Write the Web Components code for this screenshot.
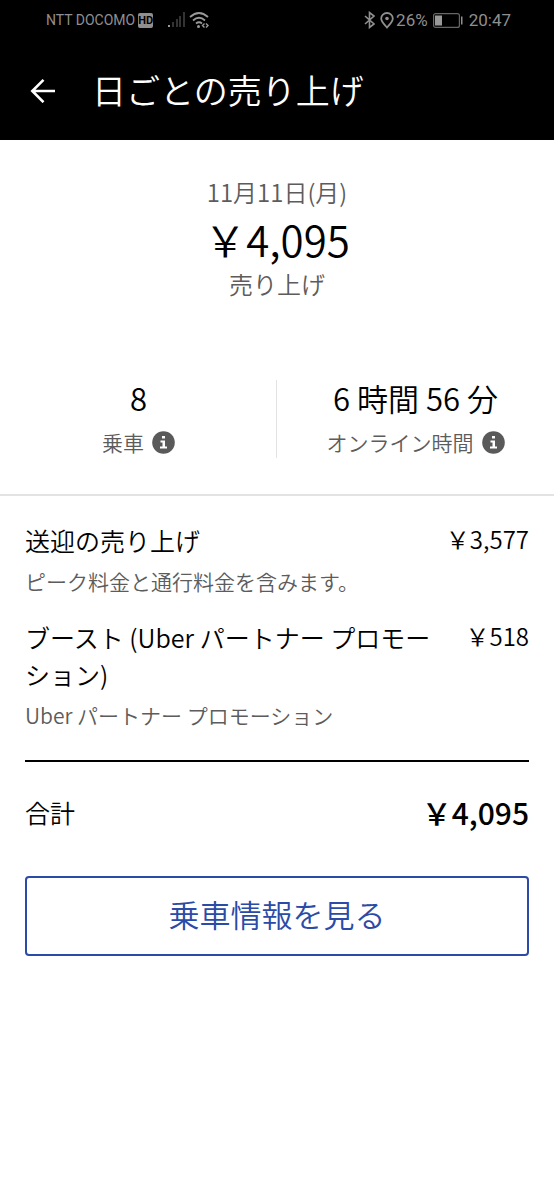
<!DOCTYPE html>
<html lang="ja">
<head>
<meta charset="utf-8">
<meta name="viewport" content="width=device-width, initial-scale=1">
<title>日ごとの売り上げ</title>
<style>
  body {
    margin: 0;
    background: #fff;
    color: #000;
    font-family: "Noto Sans CJK JP", sans-serif;
    font-weight: 350;
    --muted: #5c5c5c;
    --line: #e3e3e3;
    --accent: #2b4ba6;
    --gutter: 25px;
  }
</style>
</head>
<body>
<earnings-page></earnings-page>

<script>
const define = (name, html) => {
  const template = document.createElement('template');
  template.innerHTML = html;
  customElements.define(name, class extends HTMLElement {
    constructor() {
      super();
      this.attachShadow({ mode: 'open' }).append(template.content.cloneNode(true));
    }
  });
};

define('status-bar', `
  <style>
    :host { display: flex; justify-content: space-between; align-items: center; height: 40px;
      padding: 0 43px 0 46px; background: #000; color: #8f8f8f; font: 17px/24px Roboto, sans-serif; }
    div { display: flex; align-items: center; }
    .carrier { font-size: 14px; }
    svg { display: block; flex: none; }
    .hd { margin-left: 3px; border-radius: 2px; background: #8f8f8f; color: #000;
      font: bold 11px/15px Roboto, sans-serif; }
    .signal { margin-left: 15px; }
    .wifi { margin-left: 4px; }
    .pin { margin: 0 2px 0 5px; }
    .battery { margin: 0 6px 0 5px; }
  </style>
  <div>
    <span class="carrier">NTT DOCOMO</span><span class="hd">HD</span>
    <svg class="signal" width="17" height="16" viewBox="0 0 17 16" fill="#333">
      <rect x="0" y="13" width="2" height="2" fill="#999"/><rect x="4" y="10" width="2" height="5"/>
      <rect x="8" y="7" width="2" height="8"/><rect x="11" y="4" width="2" height="11"/><rect x="15" y="0" width="2" height="15"/>
    </svg>
    <svg class="wifi" width="20" height="18" viewBox="0 0 20 18" fill="none" stroke="#999" stroke-width="2">
      <path d="M1 6Q10-2 19 6M4 9.500Q10 4 16 9.500M7 12.500q3-2.500 6 0" stroke-width="1.800"/>
      <circle cx="9.500" cy="15.500" r="1.500" fill="#999" stroke="none"/>
      <path d="M15.500 12.500L13.500 14.500L15.500 16.500M17 12.500L19 14.500L17 16.500" stroke-width="1.400"/>
    </svg>
  </div>
  <div>
    <svg width="11" height="18" viewBox="0 0 11 18" fill="none" stroke="#8f8f8f" stroke-width="1.600">
      <path d="M1 5L10 13L5.500 16.500V1.500L10 5L1 13"/>
    </svg>
    <svg class="pin" width="14" height="17" viewBox="0 0 14 17" fill="none" stroke="#8f8f8f" stroke-width="1.800">
      <path d="M7 15.500C5 13 1.200 10 1.200 6.500A5.800 5.500 0 0 1 12.800 6.500C12.800 10 9 13 7 15.500Z"/>
      <circle cx="7" cy="6.500" r="1.800" fill="#8f8f8f" stroke="none"/>
    </svg>
    <span>26%</span>
    <svg class="battery" width="30" height="15" viewBox="0 0 30 15">
      <rect x=".600" y=".600" width="25.800" height="13.800" rx="2" fill="none" stroke="#666" stroke-width="1.200"/>
      <rect x="2" y="2.500" width="7" height="10" fill="#999"/><rect x="28" y="3.500" width="1.500" height="8" fill="#8f8f8f"/>
    </svg>
    <span>20:47</span>
  </div>
`);

define('app-bar', `
  <style>
    :host { display: flex; align-items: center; gap: 27px; height: 100px; padding: 0 var(--gutter);
      background: #000; color: #fff; box-sizing: border-box; }
    button { display: flex; align-items: center; justify-content: center; width: 44px; height: 44px;
      margin: 0 0 0 -4px; padding: 0; border: 0; background: none; color: inherit; }
    h1 { margin: 0; font-size: 34px; font-weight: inherit; line-height: 50px; }
  </style>
  <button type="button" aria-label="戻る">
    <svg width="26" height="26" viewBox="0 0 26 26" fill="none" stroke="currentColor" stroke-width="2.600">
      <path d="M25 14H2.500M13.500 2.800L2.300 14L13.500 25.200"/>
    </svg>
  </button>
  <h1><slot></slot></h1>
`);

define('earnings-summary', `
  <style>
    :host { display: flex; flex-direction: column; align-items: center; padding: 34px var(--gutter) 0; text-align: center; }
    .date, .label { color: var(--muted); font-size: 24px; line-height: 36px; }
    .amount { font-size: 42px; line-height: 58px; }
    .label { line-height: 32px; }
  </style>
  <div class="date"><slot name="date"></slot></div>
  <div class="amount"><slot name="amount"></slot></div>
  <div class="label"><slot></slot></div>
`);

define('stat-item', `
  <style>
    :host { display: flex; flex-direction: column; align-items: center; height: 78px; }
    .value { font-size: 31px; line-height: 36px; }
    .label { display: flex; align-items: center; gap: 8px; margin-top: 10px; color: var(--muted);
      font-size: 21px; line-height: 32px; }
    button { display: block; padding: 0; border: 0; background: none; color: inherit; }
    svg { display: block; }
  </style>
  <div class="value"><slot name="value"></slot></div>
  <div class="label"><slot></slot>
    <button type="button" aria-label="詳細">
      <svg width="23" height="23" viewBox="0 0 23 23"><circle cx="11.500" cy="11.500" r="11.300" fill="#5a5a5a"/>
        <path d="M10 5h3v2.600h-3zM8.500 9.500h4.500v6h2v2h-7v-2h2.500v-4h-2z" fill="#fff"/></svg>
    </button>
  </div>
`);

define('stat-pair', `
  <style>
    :host { display: grid; grid-template-columns: 1fr 1fr; padding: 80px 0 36px; border-bottom: 2px solid var(--line); }
    ::slotted(:last-child) { box-shadow: -1px 0 var(--line); }
  </style>
  <slot></slot>
`);

define('earning-row', `
  <style>
    :host { display: grid; grid-template-columns: minmax(0, 1fr) auto; column-gap: 24px; }
    .title { font-size: 25px; line-height: 37px; }
    .amount { font-size: 24px; line-height: 34px; text-align: right; }
    .note { grid-column: 1 / -1; margin-top: 4px; color: var(--muted); font-size: 21px; line-height: 36px; }
  </style>
  <div class="title"><slot></slot></div>
  <div class="amount"><slot name="amount"></slot></div>
  <div class="note"><slot name="note"></slot></div>
`);

define('total-row', `
  <style>
    :host { display: flex; align-items: center; justify-content: space-between; border-top: 2px solid #000;
      padding: 26px 0 40px; font-size: 25px; line-height: 48px; }
    .amount { font-size: 30px; font-weight: 500; }
  </style>
  <span><slot></slot></span>
  <span class="amount"><slot name="amount"></slot></span>
`);

define('outline-button', `
  <style>
    :host { display: block; }
    button { display: block; width: 100%; padding: 12px 14px 16px; border: 2px solid var(--accent); border-radius: 4px;
      background: #fff; color: var(--accent); font: inherit; font-size: 31px; line-height: 48px; }
  </style>
  <button type="button"><slot></slot></button>
`);

define('earnings-page', `
  <style>
    :host { display: block; }
    section { display: flex; flex-direction: column; gap: 20px; padding: 26px var(--gutter) 27px; }
    footer { padding: 0 var(--gutter) 40px; }
  </style>
  <status-bar></status-bar>
  <app-bar>日ごとの売り上げ</app-bar>
  <main>
    <earnings-summary>
      <span slot="date">11月11日(月)</span>
      <span slot="amount">￥4,095</span>売り上げ
    </earnings-summary>
    <stat-pair>
      <stat-item><span slot="value">8</span>乗車</stat-item>
      <stat-item><span slot="value">6 時間 56 分</span>オンライン時間</stat-item>
    </stat-pair>
    <section>
      <earning-row>送迎の売り上げ<span slot="amount">￥3,577</span><span slot="note">ピーク料金と通行料金を含みます。</span></earning-row>
      <earning-row>ブースト (Uber パートナー プロモーション)<span slot="amount">￥518</span><span slot="note">Uber パートナー プロモーション</span></earning-row>
    </section>
    <footer>
      <total-row>合計<span slot="amount">￥4,095</span></total-row>
      <outline-button>乗車情報を見る</outline-button>
    </footer>
  </main>
`);
</script>
</body>
</html>
